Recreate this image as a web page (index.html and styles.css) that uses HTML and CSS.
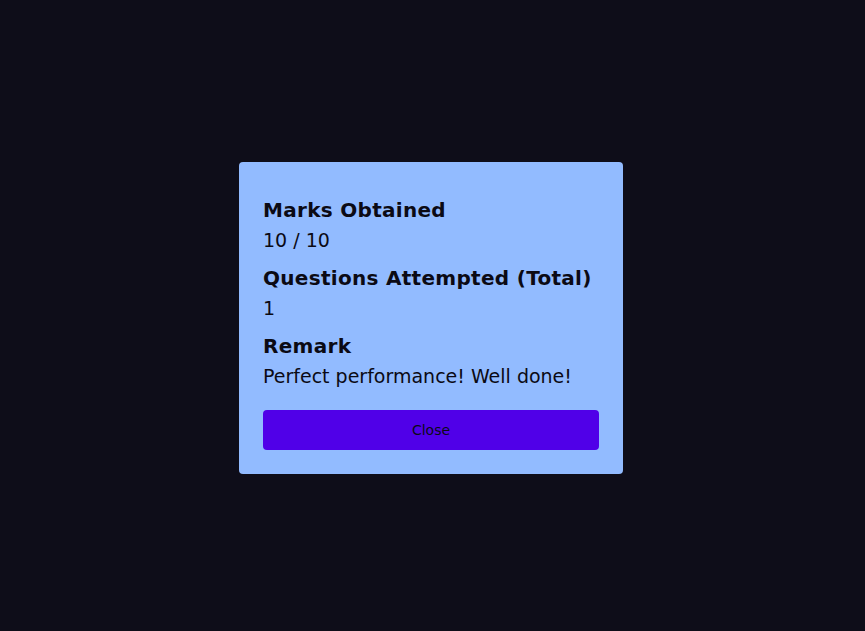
FILE: index.html
```html
<!DOCTYPE html>
<html lang="en">
<head>
<meta charset="utf-8">
<title>Result</title>
<link rel="stylesheet" href="styles.css">
</head>
<body>
<div class="overlay">
  <div class="card">
    <div class="section">
      <h3 class="label">Marks Obtained</h3>
      <p class="value">10 / 10</p>
    </div>
    <div class="section">
      <h3 class="label">Questions Attempted (Total)</h3>
      <p class="value">1</p>
    </div>
    <div class="section">
      <h3 class="label">Remark</h3>
      <p class="value">Perfect performance! Well done!</p>
    </div>
    <button class="close-btn">Close</button>
  </div>
</div>
</body>
</html>
```
FILE: styles.css
```css
html, body {
  margin: 0;
  padding: 0;
  height: 100%;
}
body {
  background: #0e0d19;
  font-family: "DejaVu Sans", "Open Sans", sans-serif;
  color: #0b0a14;
}
.overlay {
  height: 100%;
  display: flex;
  align-items: center;
  justify-content: center;
}
.card {
  width: 384px;
  box-sizing: border-box;
  background: #92bbff;
  border-radius: 4px;
  padding: 34px 24px 24px;
  display: flex;
  flex-direction: column;
  margin: 5px 3px 0 0;
}
.section {
  display: flex;
  flex-direction: column;
  gap: 2px;
  margin-bottom: 10px;
}
.label {
  margin: 0;
  font-size: 20px;
  line-height: 28px;
  font-weight: 700;
  letter-spacing: 0.3px;
}
.value {
  margin: 0;
  font-size: 19px;
  line-height: 28px;
  font-weight: 400;
}
.close-btn {
  margin-top: 10px;
  height: 40px;
  border: none;
  border-radius: 4px;
  background: #5000e8;
  color: #0b0a14;
  font-family: inherit;
  font-size: 14px;
}
```
